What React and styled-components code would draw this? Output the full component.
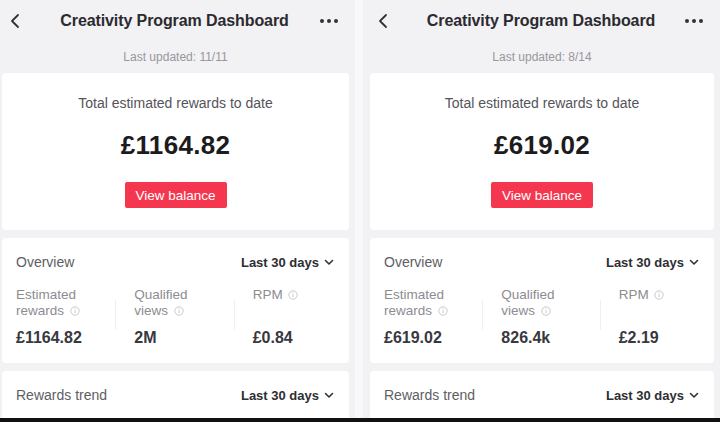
import styled, { createGlobalStyle } from 'styled-components';

const GlobalStyle = createGlobalStyle`
  html, body {
    margin: 0;
    padding: 0;
    background: #f2f1f4;
    overflow: hidden;
  }
  body {
    font-family: 'Liberation Sans', Arial, sans-serif;
  }
`;

const screens = [
  {
    updated: '11/11',
    total: '£1164.82',
    rewards: '£1164.82',
    views: '2M',
    rpm: '£0.84',
  },
  {
    updated: '8/14',
    total: '£619.02',
    rewards: '£619.02',
    views: '826.4k',
    rpm: '£2.19',
  },
];

const BackIcon = () => (
  <svg width="10" height="16" viewBox="0 0 10 16" fill="none">
    <path d="M8 2L2 8l6 6" stroke="#333" strokeWidth="1.8" strokeLinecap="round" strokeLinejoin="round" />
  </svg>
);

const MoreIcon = () => (
  <svg width="20" height="6" viewBox="0 0 20 6">
    <circle cx="3" cy="3" r="2" fill="#333" />
    <circle cx="10" cy="3" r="2" fill="#333" />
    <circle cx="17" cy="3" r="2" fill="#333" />
  </svg>
);

const ChevronDown = () => (
  <svg width="10" height="7" viewBox="0 0 10 7" fill="none">
    <path d="M1.5 1.5L5 5l3.5-3.5" stroke="#333" strokeWidth="1.6" strokeLinecap="round" strokeLinejoin="round" />
  </svg>
);

const InfoIcon = () => (
  <svg width="10" height="10" viewBox="0 0 10 10" fill="none">
    <circle cx="5" cy="5" r="4.2" stroke="#c4c4c4" strokeWidth="0.9" />
    <path d="M5 4.3v3" stroke="#c4c4c4" strokeWidth="0.9" />
    <circle cx="5" cy="2.9" r="0.55" fill="#c4c4c4" />
  </svg>
);

function Screen({ data, first }) {
  return (
    <ScreenWrap $first={first}>
      <Header>
        <HeaderIcon>
          <BackIcon />
        </HeaderIcon>
        <Title>Creativity Program Dashboard</Title>
        <HeaderIcon $right>
          <MoreIcon />
        </HeaderIcon>
      </Header>
      <Updated>Last updated: {data.updated}</Updated>

      <TotalCard>
        <TotalLabel>Total estimated rewards to date</TotalLabel>
        <TotalAmount>{data.total}</TotalAmount>
        <BalanceButton>View balance</BalanceButton>
      </TotalCard>

      <Card>
        <CardHead>
          <CardTitle>Overview</CardTitle>
          <RangePicker>
            Last 30 days <ChevronDown />
          </RangePicker>
        </CardHead>
        <Metrics>
          <Metric>
            <MetricLabel>
              Estimated
              <br />
              rewards <InfoIcon />
            </MetricLabel>
            <MetricValue>{data.rewards}</MetricValue>
          </Metric>
          <Divider />
          <Metric>
            <MetricLabel>
              Qualified
              <br />
              views <InfoIcon />
            </MetricLabel>
            <MetricValue>{data.views}</MetricValue>
          </Metric>
          <Divider />
          <Metric>
            <MetricLabel>
              RPM <InfoIcon />
              <br />
              &nbsp;
            </MetricLabel>
            <MetricValue>{data.rpm}</MetricValue>
          </Metric>
        </Metrics>
      </Card>

      <Card $last>
        <CardHead>
          <CardTitle>Rewards trend</CardTitle>
          <RangePicker>
            Last 30 days <ChevronDown />
          </RangePicker>
        </CardHead>
      </Card>
    </ScreenWrap>
  );
}

export default function App() {
  return (
    <>
      <GlobalStyle />
      <Page>
        <Screens>
          <Screen data={screens[0]} first />
          <Seam />
          <Screen data={screens[1]} />
        </Screens>
        <BottomBar />
      </Page>
    </>
  );
}

// ---------------- layout ------------------------
const Page = styled.div`
  display: flex;
  flex-direction: column;
  width: 720px;
  height: 422px;
  overflow: hidden;
`;

const Screens = styled.div`
  display: flex;
  height: 418px;
  flex-shrink: 0;
  overflow: hidden;
`;

const Seam = styled.div`
  width: 8px;
  flex-shrink: 0;
  background: #f8f8fa;
`;

const BottomBar = styled.div`
  height: 4px;
  flex-shrink: 0;
  background: #111;
`;

const ScreenWrap = styled.div`
  display: flex;
  flex-direction: column;
  flex-shrink: 0;
  width: ${({ $first }) => ($first ? '360px' : '357px')};
  margin-left: ${({ $first }) => ($first ? '-5px' : '0')};
  padding: 0 6px 0 7px;
  box-sizing: border-box;
  background: #f2f1f4;
`;

// ---------------- header ------------------------
const Header = styled.div`
  display: flex;
  align-items: center;
  justify-content: space-between;
  height: 42px;
  padding: 0 10px 0 8px;
  flex-shrink: 0;
`;

const HeaderIcon = styled.div`
  display: flex;
  align-items: center;
  width: 24px;
  justify-content: ${({ $right }) => ($right ? 'flex-end' : 'flex-start')};
`;

const Title = styled.div`
  font-size: 16px;
  font-weight: 700;
  color: #2b2b2f;
  letter-spacing: -0.1px;
`;

const Updated = styled.div`
  text-align: center;
  font-size: 12px;
  line-height: 14px;
  color: #97979c;
  margin: 8px 0 9px;
  flex-shrink: 0;
`;

// ---------------- cards ------------------------
const Card = styled.div`
  background: #fff;
  border-radius: 4px;
  padding: 14px 15px ${({ $last }) => ($last ? '30px' : '15px')} 14px;
  margin-bottom: ${({ $last }) => ($last ? '0' : '8px')};
  flex-shrink: 0;
`;

const TotalCard = styled(Card)`
  display: flex;
  flex-direction: column;
  align-items: center;
  padding: 22px 15px 22px;
`;

const TotalLabel = styled.div`
  font-size: 14px;
  color: #545459;
`;

const TotalAmount = styled.div`
  font-size: 26px;
  font-weight: 700;
  color: #1c1c20;
  margin-top: 19px;
  letter-spacing: 0.3px;
`;

const BalanceButton = styled.button`
  margin-top: 21px;
  width: 102px;
  height: 26px;
  border: none;
  border-radius: 2px;
  background: #f5364f;
  color: #fff;
  font-family: inherit;
  font-size: 13.5px;
  padding: 0;
`;

const CardHead = styled.div`
  display: flex;
  align-items: center;
  justify-content: space-between;
  height: 20px;
`;

const CardTitle = styled.div`
  font-size: 14px;
  color: #5e5e63;
`;

const RangePicker = styled.div`
  display: flex;
  align-items: center;
  gap: 5px;
  font-size: 13px;
  font-weight: 700;
  color: #2e2e33;
`;

const Metrics = styled.div`
  display: flex;
  gap: 18px;
  margin-top: 15px;
`;

const Metric = styled.div`
  flex: 1;
  display: flex;
  flex-direction: column;
`;

const Divider = styled.div`
  width: 1px;
  height: 30px;
  align-self: center;
  margin-top: -6px;
  background: #efeff1;
`;

const MetricLabel = styled.div`
  font-size: 13.5px;
  line-height: 16px;
  color: #8c8c91;

  svg {
    vertical-align: -1px;
    margin-left: 2px;
  }
`;

const MetricValue = styled.div`
  font-size: 16px;
  font-weight: 700;
  color: #38383d;
  margin-top: 9px;
  line-height: 20px;
`;
